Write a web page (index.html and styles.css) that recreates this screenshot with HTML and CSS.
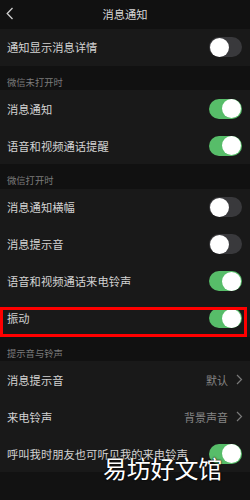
FILE: index.html
```html
<!DOCTYPE html>
<html lang="zh">
<head>
<meta charset="utf-8">
<link rel="stylesheet" href="styles.css">
</head>
<body>
<div class="page">
  <header class="topbar">
    <svg class="back" width="8" height="13" viewBox="0 0 8 13"><path d="M6.5 1 L1.2 6.5 L6.5 12" fill="none" stroke="#cfcfcf" stroke-width="1.3"/></svg>
    <div class="title">消息通知</div>
  </header>

  <div class="row"><span class="label">通知显示消息详情</span><span class="toggle"></span></div>

  <div class="section">微信未打开时</div>
  <div class="row"><span class="label">消息通知</span><span class="toggle on"></span></div>
  <div class="row"><span class="label">语音和视频通话提醒</span><span class="toggle on"></span></div>

  <div class="section">微信打开时</div>
  <div class="row"><span class="label">消息通知横幅</span><span class="toggle"></span></div>
  <div class="row"><span class="label">消息提示音</span><span class="toggle"></span></div>
  <div class="row"><span class="label">语音和视频通话来电铃声</span><span class="toggle on"></span></div>
  <div class="row highlight"><span class="label">振动</span><span class="toggle on"></span><span class="redbox"></span></div>

  <div class="section">提示音与铃声</div>
  <div class="row"><span class="label">消息提示音</span><span class="value">默认<svg class="chev" width="7" height="11" viewBox="0 0 7 11"><path d="M1 1 L5.5 5.5 L1 10" fill="none" stroke="#7a7a7a" stroke-width="1.2"/></svg></span></div>
  <div class="row"><span class="label">来电铃声</span><span class="value">背景声音<svg class="chev" width="7" height="11" viewBox="0 0 7 11"><path d="M1 1 L5.5 5.5 L1 10" fill="none" stroke="#7a7a7a" stroke-width="1.2"/></svg></span></div>
  <div class="row"><span class="label">呼叫我时朋友也可听见我的来电铃声</span><span class="toggle on"></span></div>

  <div class="watermark">易坊好文馆</div>
</div>
</body>
</html>
```

FILE: styles.css
```css
* { box-sizing: border-box; }
html, body {
  margin: 0;
  padding: 0;
  background: #121212;
}
body {
  font-family: "Noto Sans CJK SC", "Noto Sans", sans-serif;
  width: 250px;
  height: 500px;
  overflow: hidden;
}
.page {
  position: relative;
  display: flex;
  flex-direction: column;
  height: 500px;
}
.topbar {
  position: relative;
  height: 28.5px;
  background: #111111;
  display: flex;
  align-items: center;
  justify-content: center;
}
.back {
  position: absolute;
  left: 6px;
  top: 7px;
}
.title {
  color: #d6d6d6;
  font-size: 11.3px;
  line-height: 14px;
}
.row {
  position: relative;
  height: 37px;
  background: #191919;
  display: flex;
  align-items: center;
  justify-content: space-between;
  padding: 0 8px 0 7px;
}
.label {
  color: #d2d2d2;
  font-size: 11.3px;
  line-height: 14px;
  white-space: nowrap;
}
.section {
  height: 24.5px;
  background: #111111;
  color: #7c7c7c;
  font-size: 9.3px;
  line-height: 11px;
  padding: 11px 0 0 7px;
}
.toggle {
  position: relative;
  flex: none;
  width: 33px;
  height: 20px;
  border-radius: 10px;
  background: #39393c;
}
.toggle::after {
  content: "";
  position: absolute;
  left: 1px;
  top: 0.5px;
  width: 19px;
  height: 19px;
  border-radius: 50%;
  background: #ffffff;
}
.toggle.on {
  background: #57bd69;
}
.toggle.on::after {
  left: 13px;
}
.value {
  display: flex;
  align-items: center;
  gap: 8px;
  color: #858585;
  font-size: 11px;
  line-height: 14px;
  margin-right: -1px;
}
.redbox {
  position: absolute;
  left: 0;
  right: 3px;
  top: 7.5px;
  bottom: -0.5px;
  border: 3px solid #ff0000;
  pointer-events: none;
}
.watermark {
  position: absolute;
  left: 103px;
  top: 455px;
  color: #ffffff;
  font-size: 24px;
  line-height: 26px;
  letter-spacing: -0.2px;
  text-shadow: 0 0 2px #000, 0 0 1px #000;
  white-space: nowrap;
}
```
